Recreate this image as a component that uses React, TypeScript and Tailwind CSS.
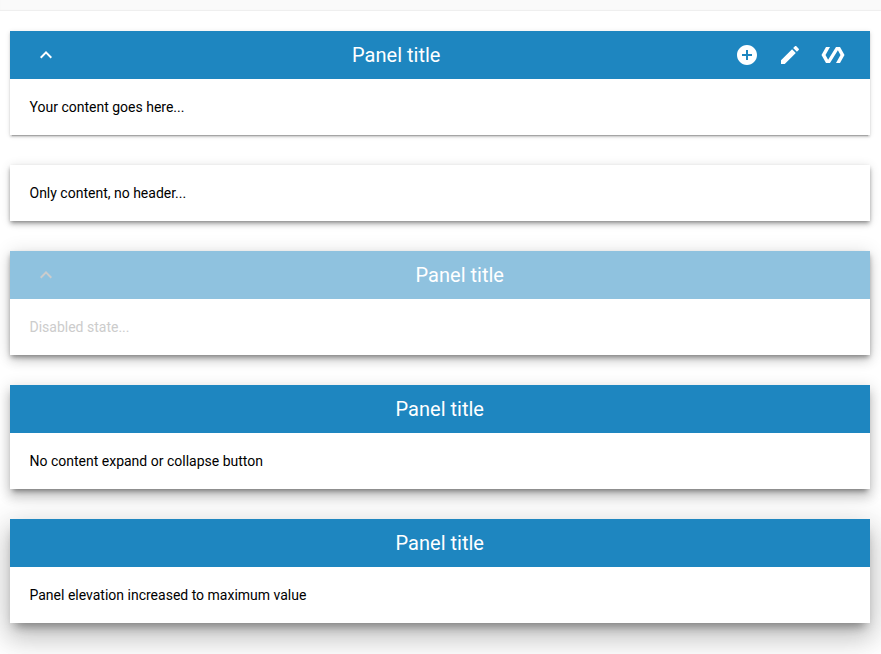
import React from 'react';

type PanelProps = {
  title?: string;
  content: string;
  shadow: string;
  collapsible?: boolean;
  disabled?: boolean;
  actions?: boolean;
};

function Panel({ title, content, shadow, collapsible, disabled, actions }: PanelProps) {
  return (
    <section className={`bg-white ${shadow}`}>
      {title && (
        <header className={`flex h-12 items-center text-white ${disabled ? 'bg-[#8fc2df]' : 'bg-[#1e86c0]'}`}>
          {collapsible && (
            <button className="ml-6 flex size-6 shrink-0 items-center justify-center" disabled={disabled}>
              <svg viewBox="0 0 24 24" className={`size-6 ${disabled ? 'fill-[#cccccc]' : 'fill-white'}`}>
                <path d="M12 8l-6 6 1.41 1.41L12 10.83l4.59 4.58L18 14z" />
              </svg>
            </button>
          )}
          <h2 className={`flex-1 pl-[0.5px] text-center text-[20px] leading-7 ${collapsible && !actions ? 'pr-2' : ''}`}>{title}</h2>
          {actions && (
            <div className="mr-[25px] flex items-center gap-[19px]">
              <svg viewBox="0 0 24 24" className="size-6 fill-white">
                <path d="M12 2C6.48 2 2 6.48 2 12s4.48 10 10 10 10-4.48 10-10S17.52 2 12 2zm5 11h-4v4h-2v-4H7v-2h4V7h2v4h4v2z" />
              </svg>
              <svg viewBox="0 0 24 24" className="size-6 fill-white">
                <path d="M3 17.25V21h3.75L17.81 9.94l-3.75-3.75L3 17.25zM20.71 7.04c.39-.39.39-1.02 0-1.41l-2.34-2.34c-.39-.39-1.02-.39-1.41 0l-1.83 1.83 3.75 3.75 1.83-1.83z" />
              </svg>
              <svg viewBox="0 0 24 24" className="size-6 fill-white">
                <path d="M19 4h-4L7.11 16.63 4.5 12 9 4H5L.5 12 5 20h4l7.89-12.63L19.5 12 15 20h4l4.5-8z" />
              </svg>
            </div>
          )}
        </header>
      )}
      <div className={`px-5 py-[18px] text-[14px] leading-5 ${disabled ? 'text-[#cccccc]' : 'text-black'}`}>{content}</div>
    </section>
  );
}

export default function App() {
  return (
    <main className="h-[654px] overflow-hidden bg-white font-['Roboto',sans-serif]">
      <div className="h-[11px] bg-[#fafafa] shadow-[inset_0_-1px_1px_rgba(0,0,0,0.05)]" />
      <div className="flex flex-col gap-[30px] pt-5 pr-[11.5px] pl-[9.5px]">
        <Panel title="Panel title" content="Your content goes here..." collapsible actions shadow="shadow-[0_2px_2px_0_rgba(0,0,0,0.14),0_1px_5px_0_rgba(0,0,0,0.12),0_3px_1px_-2px_rgba(0,0,0,0.2)]" />
        <Panel content="Only content, no header..." shadow="shadow-[0_4px_5px_0_rgba(0,0,0,0.14),0_1px_10px_0_rgba(0,0,0,0.12),0_2px_4px_-1px_rgba(0,0,0,0.4)]" />
        <Panel title="Panel title" content="Disabled state..." collapsible disabled shadow="shadow-[0_6px_10px_0_rgba(0,0,0,0.14),0_1px_18px_0_rgba(0,0,0,0.12),0_3px_5px_-1px_rgba(0,0,0,0.4)]" />
        <Panel title="Panel title" content="No content expand or collapse button" shadow="shadow-[0_8px_10px_1px_rgba(0,0,0,0.14),0_3px_14px_2px_rgba(0,0,0,0.12),0_5px_5px_-3px_rgba(0,0,0,0.4)]" />
        <Panel title="Panel title" content="Panel elevation increased to maximum value" shadow="shadow-[0_16px_24px_2px_rgba(0,0,0,0.14),0_6px_30px_5px_rgba(0,0,0,0.12),0_8px_10px_-5px_rgba(0,0,0,0.4)]" />
      </div>
    </main>
  );
}
